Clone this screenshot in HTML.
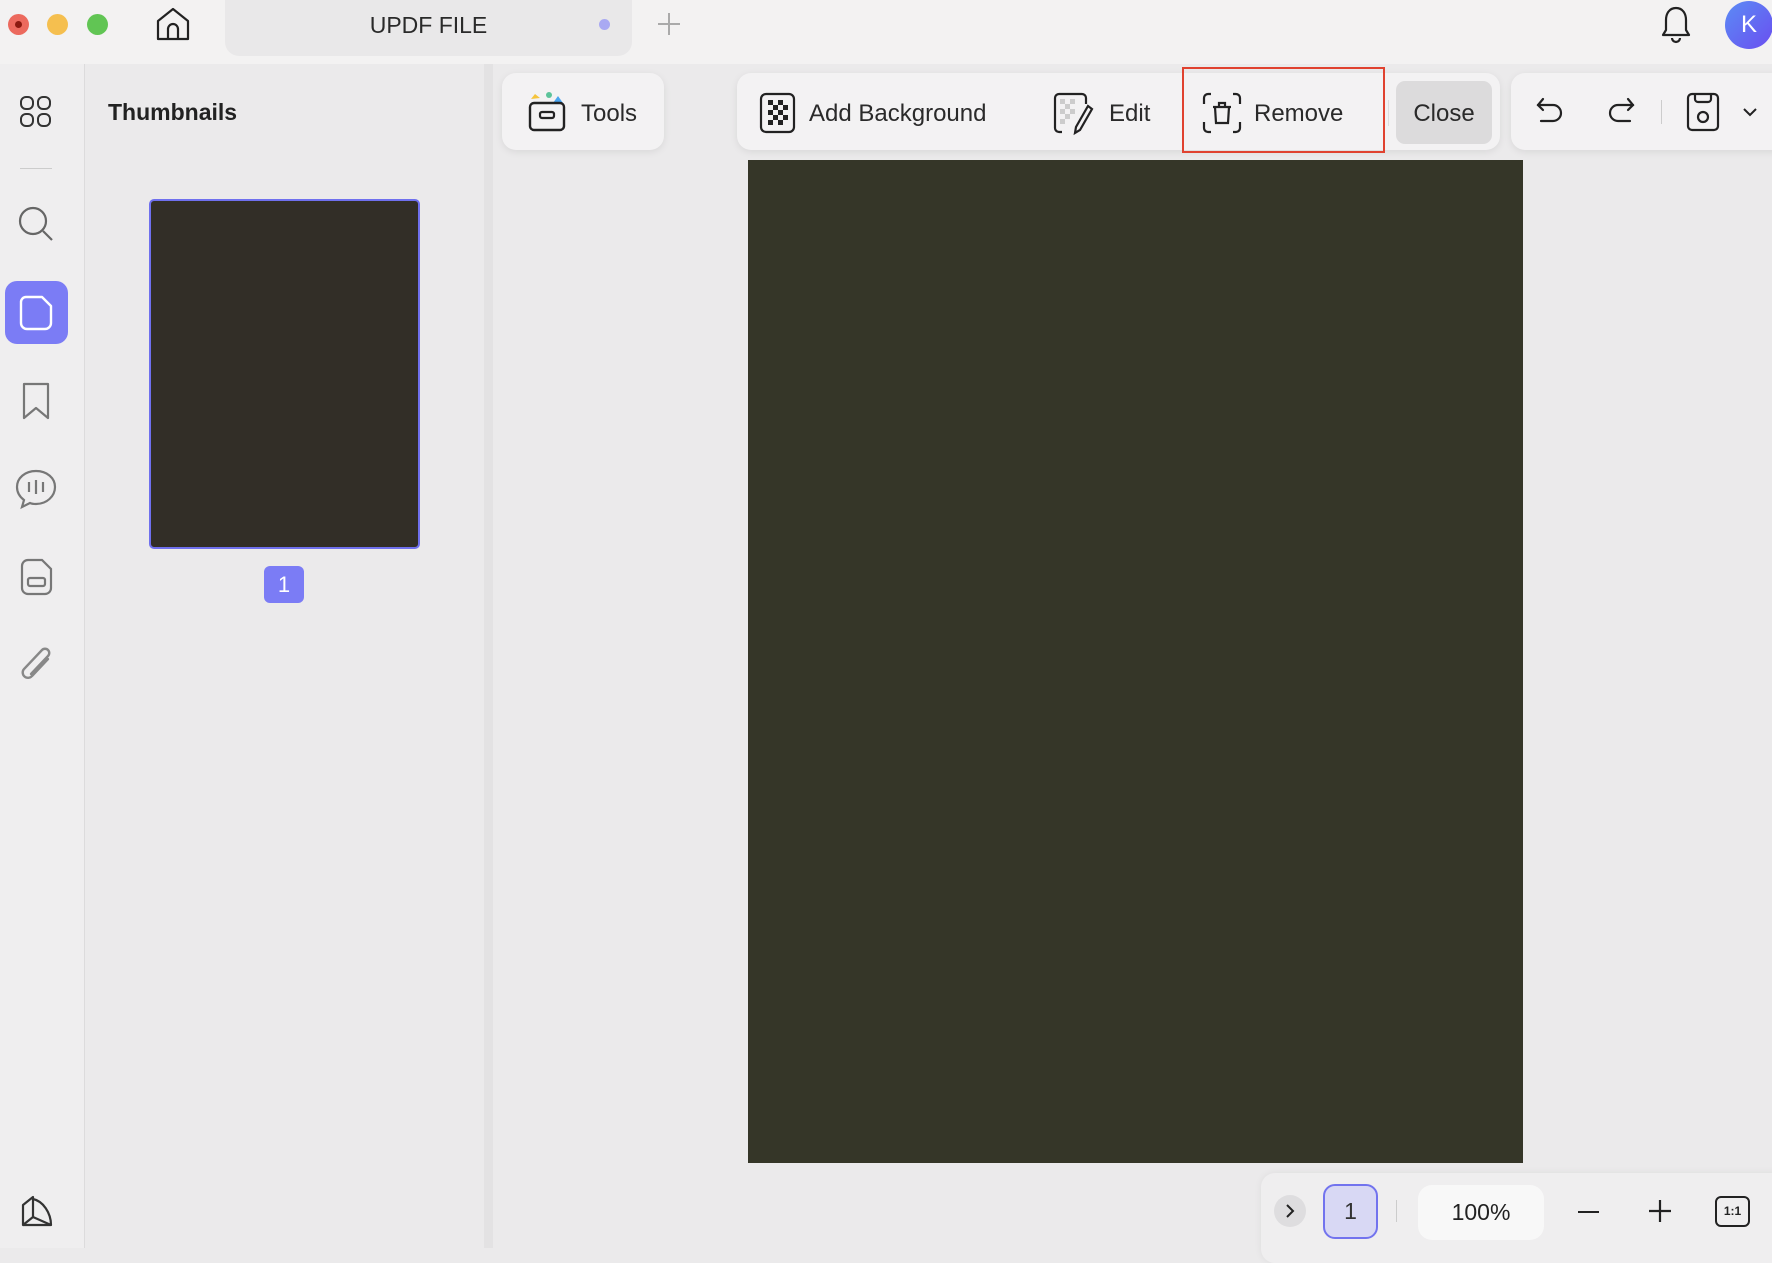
<!DOCTYPE html>
<html><head><meta charset="utf-8"><style>
*{margin:0;padding:0;box-sizing:border-box}
body{width:1772px;height:1248px;overflow:hidden;background:#ebeaeb;font-family:"Liberation Sans",sans-serif;color:#222;position:relative}
.a{position:absolute}
svg{position:absolute;overflow:visible}
.t{font-size:24px;color:#2a2a2a;white-space:nowrap}
</style></head><body>
<!-- title bar -->
<div class="a" style="left:0;top:0;width:1772px;height:64px;background:#f3f2f2"></div>
<div class="a" style="left:8px;top:14px;width:21px;height:21px;border-radius:50%;background:#ec6a5e"></div>
<div class="a" style="left:15px;top:21px;width:7px;height:7px;border-radius:50%;background:#8b1a10"></div>
<div class="a" style="left:47px;top:14px;width:21px;height:21px;border-radius:50%;background:#f5bf4f"></div>
<div class="a" style="left:87px;top:14px;width:21px;height:21px;border-radius:50%;background:#61c554"></div>
<svg style="left:155px;top:6px" width="36" height="36" viewBox="0 0 36 36" fill="none" stroke="#222" stroke-width="2.2" stroke-linejoin="round"><path d="M3 15 L18 3 L33 15 V33 H3 Z"/><path d="M13 33 V23 a5 5 0 0 1 10 0 V33"/></svg>
<div class="a" style="left:225px;top:0;width:407px;height:56px;background:#e9e8e9;border-radius:0 0 14px 14px"></div>
<div class="a t" style="left:225px;top:12px;width:407px;text-align:center;font-size:23px">UPDF FILE</div>
<div class="a" style="left:599px;top:19px;width:11px;height:11px;border-radius:50%;background:#a9a9f2"></div>
<svg style="left:658px;top:13px" width="22" height="22" fill="none" stroke="#aaa" stroke-width="2"><path d="M11 0V22M0 11H22"/></svg>
<svg style="left:1660px;top:5px" width="32" height="40" fill="none" stroke="#222" stroke-width="2.2" stroke-linejoin="round"><path d="M16 3 C9 3 6 9 6 15 V25 L3 30 H29 L26 25 V15 C26 9 23 3 16 3Z"/><path d="M12 33 a4 4 0 0 0 8 0"/></svg>
<div class="a" style="left:1725px;top:1px;width:48px;height:48px;border-radius:50%;background:linear-gradient(135deg,#5b8cf5,#6a4ef0);color:#fff;font-size:24px;text-align:center;line-height:48px">K</div>

<!-- left rail -->
<div class="a" style="left:0;top:64px;width:85px;height:1184px;background:#efeeef;border-right:1px solid #dcdbdc"></div>
<svg style="left:20px;top:96px" width="32" height="32" fill="none" stroke="#333" stroke-width="2"><rect x="1" y="1" width="12" height="12" rx="5"/><rect x="18" y="1" width="12" height="12" rx="5"/><rect x="1" y="18" width="12" height="12" rx="5"/><rect x="18" y="18" width="12" height="12" rx="5"/></svg>
<div class="a" style="left:20px;top:168px;width:32px;height:1px;background:#ccc"></div>
<svg style="left:17px;top:205px" width="38" height="38" fill="none" stroke="#666" stroke-width="2.2"><circle cx="16" cy="16" r="13"/><path d="M26 26L35 35"/></svg>
<div class="a" style="left:5px;top:281px;width:63px;height:63px;border-radius:12px;background:#7b7cf5"></div>
<svg style="left:20px;top:295px" width="33" height="36" fill="none" stroke="#fff" stroke-width="2.4" stroke-linejoin="round"><path d="M6 2 H22 L31 11 V28 a6 6 0 0 1 -6 6 H7 a6 6 0 0 1 -6 -6 V7 a5 5 0 0 1 5 -5Z"/></svg>
<svg style="left:22px;top:382px" width="28" height="38" fill="none" stroke="#777" stroke-width="2.2" stroke-linejoin="round"><path d="M2 2 H26 V36 L14 26 L2 36 Z"/></svg>
<svg style="left:15px;top:469px" width="42" height="40" fill="none" stroke="#777" stroke-width="2.2"><path d="M21 2 C10 2 2 9 2 18 C2 24 5 28 9 31 L7 38 L15 34 C17 35 19 35 21 35 C32 35 40 27 40 18 C40 9 32 2 21 2Z"/><path d="M14 13V23M21 11V25M28 13V23"/></svg>
<svg style="left:20px;top:558px" width="33" height="38" fill="none" stroke="#777" stroke-width="2.2"><path d="M8 2 H22 L31 11 V30 a6 6 0 0 1 -6 6 H8 a6 6 0 0 1 -6 -6 V8 a6 6 0 0 1 6 -6Z"/><rect x="8" y="20" width="17" height="8" rx="2"/></svg>
<svg style="left:18px;top:645px" width="38" height="40" fill="none" stroke="#888" stroke-width="2.4" stroke-linecap="round"><path d="M30 14 L14 31 a5 5 0 0 1 -8 -7 L24 5 a4 4 0 0 1 6 6 L13 29"/></svg>
<svg style="left:19px;top:1195px" width="36" height="34" fill="none" stroke="#333" stroke-width="2.2" stroke-linejoin="round"><path d="M4 30 V10 L14 2 V22 Z"/><path d="M14 4 C24 6 32 18 32 30 H4"/><path d="M14 22 L32 30"/></svg>

<!-- thumbnails panel -->
<div class="a" style="left:86px;top:64px;width:398px;height:1184px;background:#ebeaeb"></div>
<div class="a" style="left:484px;top:64px;width:9px;height:1184px;background:#e3e2e3"></div>
<div class="a" style="left:108px;top:99px;font-size:23px;font-weight:bold;color:#222">Thumbnails</div>
<div class="a" style="left:149px;top:199px;width:271px;height:350px;border:2.5px solid #6f70ee;border-radius:5px;background:#322e27"></div>
<div class="a" style="left:264px;top:566px;width:40px;height:37px;border-radius:6px;background:#7b7cf5;color:#fff;font-size:22px;text-align:center;line-height:37px">1</div>

<!-- Tools button -->
<div class="a" style="left:502px;top:73px;width:162px;height:77px;border-radius:14px;background:#f3f2f3;box-shadow:0 2px 8px rgba(0,0,0,.08)"></div>
<svg style="left:527px;top:90px" width="40" height="42" fill="none"><path d="M4 9 L8 4 L13 8 Z" fill="#f5c43b"/><circle cx="22" cy="5" r="3" fill="#5cc39a"/><path d="M26 13 L31 6 L36 13Z" fill="#4aa5f0"/><rect x="3" y="13" width="34" height="27" rx="4" stroke="#222" stroke-width="2.4"/><rect x="13" y="22" width="14" height="6" rx="2" stroke="#222" stroke-width="2.2"/></svg>
<div class="a t" style="left:581px;top:100px">Tools</div>

<!-- main toolbar -->
<div class="a" style="left:737px;top:73px;width:763px;height:77px;border-radius:14px;background:#f3f2f3;box-shadow:0 2px 8px rgba(0,0,0,.08)"></div>
<svg style="left:760px;top:93px" width="36" height="40" fill="none"><rect x="1" y="1" width="33" height="38" rx="5" stroke="#222" stroke-width="2.2"/><g fill="#222"><rect x="8" y="7" width="5" height="5"/><rect x="18" y="7" width="5" height="5"/><rect x="13" y="12" width="5" height="5"/><rect x="23" y="12" width="5" height="5"/><rect x="8" y="17" width="5" height="5"/><rect x="18" y="17" width="5" height="5"/><rect x="13" y="22" width="5" height="5"/><rect x="23" y="22" width="5" height="5"/><rect x="8" y="27" width="5" height="5"/><rect x="18" y="27" width="5" height="5"/></g></svg>
<div class="a t" style="left:809px;top:100px">Add Background</div>
<svg style="left:1054px;top:92px" width="40" height="42" fill="none" stroke="#222" stroke-width="2.2"><path d="M8 40 H5 a4 4 0 0 1 -4 -4 V6 a4 4 0 0 1 4 -4 H28 a4 4 0 0 1 4 4 V12"/><g fill="#ccc" stroke="none"><rect x="6" y="7" width="5" height="5"/><rect x="16" y="7" width="5" height="5"/><rect x="11" y="12" width="5" height="5"/><rect x="6" y="17" width="5" height="5"/><rect x="16" y="17" width="5" height="5"/><rect x="11" y="22" width="5" height="5"/><rect x="6" y="27" width="5" height="5"/></g><path d="M34 14 L38 17 L26 38 L21 41 L22 35 Z"/></svg>
<div class="a t" style="left:1109px;top:100px">Edit</div>
<div class="a" style="left:1182px;top:67px;width:203px;height:86px;border:2.5px solid #e0422f"></div>
<svg style="left:1202px;top:92px" width="40" height="42" fill="none" stroke="#222" stroke-width="2.2"><path d="M2 12 V6 a4 4 0 0 1 4 -4 H9 M31 2 H34 a4 4 0 0 1 4 4 V12 M38 30 V36 a4 4 0 0 1 -4 4 H31 M9 40 H6 a4 4 0 0 1 -4 -4 V30"/><path d="M11 15 H29 M17 15 V11 H23 V15 M13 15 L14 31 H26 L27 15"/></svg>
<div class="a t" style="left:1254px;top:100px">Remove</div>
<div class="a" style="left:1388px;top:100px;width:1px;height:26px;background:#ddd"></div>
<div class="a" style="left:1396px;top:81px;width:96px;height:63px;border-radius:9px;background:#dcdbdc"></div>
<div class="a t" style="left:1396px;top:100px;width:96px;text-align:center">Close</div>

<!-- right toolbar -->
<div class="a" style="left:1511px;top:73px;width:280px;height:77px;border-radius:14px;background:#f3f2f3;box-shadow:0 2px 8px rgba(0,0,0,.08)"></div>
<svg style="left:1536px;top:97px" width="28" height="28" fill="none" stroke="#222" stroke-width="2.2" stroke-linecap="round"><path d="M7 2 L2 8 L7 13"/><path d="M2 8 H17 a8 8 0 0 1 0 16 H5"/></svg>
<svg style="left:1607px;top:97px" width="28" height="28" fill="none" stroke="#222" stroke-width="2.2" stroke-linecap="round"><path d="M21 2 L26 8 L21 13"/><path d="M26 8 H11 a8 8 0 0 0 0 16 H23"/></svg>
<div class="a" style="left:1661px;top:100px;width:1px;height:24px;background:#ccc"></div>
<svg style="left:1686px;top:92px" width="34" height="40" fill="none" stroke="#222" stroke-width="2.2"><path d="M6 2 H28 a4 4 0 0 1 4 4 V34 a4 4 0 0 1 -4 4 H6 a4 4 0 0 1 -4 -4 V6 a4 4 0 0 1 4 -4Z"/><path d="M9 2 V7 a3 3 0 0 0 3 3 H22 a3 3 0 0 0 3 -3 V2"/><circle cx="17" cy="25" r="5"/></svg>
<svg style="left:1743px;top:107px" width="14" height="10" fill="none" stroke="#222" stroke-width="2"><path d="M1 2 L7 8 L13 2"/></svg>

<!-- page -->
<div class="a" style="left:748px;top:160px;width:775px;height:1003px;background:#353628"></div>

<!-- bottom bar -->
<div class="a" style="left:1261px;top:1173px;width:530px;height:90px;border-radius:14px;background:#efeeef;box-shadow:0 0 8px rgba(0,0,0,.06)"></div>
<div class="a" style="left:1274px;top:1195px;width:32px;height:32px;border-radius:50%;background:#dedddf"></div>
<svg style="left:1285px;top:1204px" width="10" height="14" fill="none" stroke="#222" stroke-width="2"><path d="M2 1 L8 7 L2 13"/></svg>
<div class="a" style="left:1323px;top:1184px;width:55px;height:55px;border-radius:12px;background:#d8d8f4;border:2px solid #7273ee;font-size:23px;text-align:center;line-height:51px;color:#333">1</div>
<div class="a" style="left:1396px;top:1200px;width:1px;height:22px;background:#ccc"></div>
<div class="a" style="left:1418px;top:1185px;width:126px;height:55px;border-radius:14px;background:#f8f8f8;font-size:23px;text-align:center;line-height:55px;color:#222">100%</div>
<div class="a" style="left:1578px;top:1211px;width:21px;height:2px;background:#222"></div>
<svg style="left:1649px;top:1200px" width="22" height="22" fill="none" stroke="#222" stroke-width="2.2"><path d="M11 0V22M0 11H22"/></svg>
<div class="a" style="left:1715px;top:1196px;width:35px;height:31px;border:2px solid #222;border-radius:6px;font-size:12px;font-weight:bold;text-align:center;line-height:27px">1:1</div>
</body></html>
